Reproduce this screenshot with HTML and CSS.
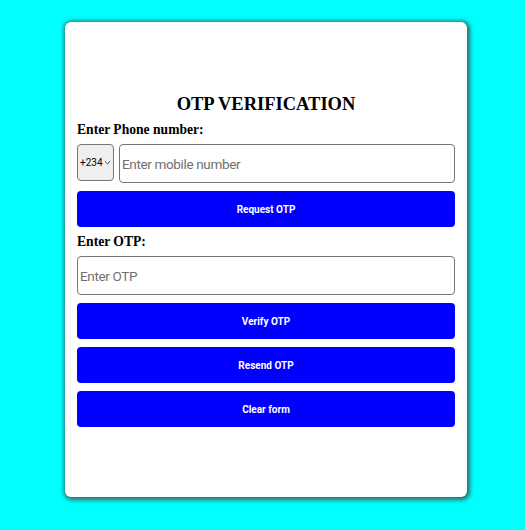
FILE: index.html
```html
<!DOCTYPE html>
<html lang="en">
<head>
<meta charset="utf-8">
<title>OTP Verification</title>
<link rel="stylesheet" href="styles.css">
</head>
<body>
<main class="card">
  <h1 class="title">OTP VERIFICATION</h1>
  <label class="label label-phone" for="phone">Enter Phone number:</label>
  <div class="phone-row">
    <div class="select-wrap">
      <select class="code-select" aria-label="Country code">
        <option>+234</option>
      </select>
      <svg class="chevron" width="7" height="5" viewBox="0 0 7 5" aria-hidden="true"><path d="M0.8 1.2 L3.5 3.8 L6.2 1.2" fill="none" stroke="#333" stroke-width="0.9"/></svg>
    </div>
    <input id="phone" class="field field-phone" type="tel" placeholder="Enter mobile number">
  </div>
  <button class="btn btn-request" type="button">Request OTP</button>
  <label class="label label-otp" for="otp">Enter OTP:</label>
  <input id="otp" class="field field-otp" type="text" placeholder="Enter OTP">
  <button class="btn btn-verify" type="button">Verify OTP</button>
  <button class="btn" type="button">Resend OTP</button>
  <button class="btn" type="button">Clear form</button>
</main>
</body>
</html>
```
FILE: styles.css
```css
html, body {
  margin: 0;
  padding: 0;
}
body {
  background: #00ffff;
  display: flex;
  justify-content: center;
  align-items: flex-start;
  padding: 22px 0 0 7px;
  min-height: 530px;
  box-sizing: border-box;
}
.card {
  width: 402px;
  height: 475px;
  box-sizing: border-box;
  background: #ffffff;
  border-radius: 6px;
  box-shadow: 1px 1px 4px 2px rgba(60, 60, 60, 0.75);
  padding: 71px 12px 0;
  display: flex;
  flex-direction: column;
}
.title {
  margin: 0;
  font-family: "Liberation Serif", "Times New Roman", serif;
  font-weight: bold;
  font-size: 18.5px;
  line-height: 22px;
  text-align: center;
  color: #000;
}
.label {
  display: block;
  font-family: "Liberation Serif", "Times New Roman", serif;
  font-weight: bold;
  font-size: 13.6px;
  line-height: 16px;
  color: #000;
}
.label-phone {
  margin-top: 7px;
}
.phone-row {
  margin-top: 6px;
  display: flex;
  align-items: flex-start;
  gap: 5px;
}
.select-wrap {
  position: relative;
  width: 37px;
  height: 37px;
  flex: none;
}
.code-select {
  appearance: none;
  -webkit-appearance: none;
  width: 100%;
  height: 100%;
  margin: 0;
  box-sizing: border-box;
  border: 1px solid #767676;
  border-radius: 4px;
  background: #efefef;
  font-family: Roboto, "Liberation Sans", sans-serif;
  font-size: 10px;
  color: #000;
  padding: 0 0 0 2px;
}
.chevron {
  position: absolute;
  left: 27px;
  top: 16px;
}
.field {
  box-sizing: border-box;
  height: 39px;
  margin: 0;
  border: 1px solid #767676;
  border-radius: 4px;
  background: #fff;
  font-family: Roboto, "Liberation Sans", sans-serif;
  font-size: 13.5px;
  letter-spacing: -0.35px;
  padding: 0 2px;
  color: #000;
}
.field::placeholder {
  color: #6f6f6f;
}
.field-phone {
  flex: 1;
  min-width: 0;
}
.field-otp {
  width: 100%;
  margin-top: 6px;
}
.label-otp {
  margin-top: 7px;
}
.btn {
  height: 36px;
  margin-top: 8px;
  border: none;
  border-radius: 4px;
  background: #0000ff;
  color: #fff;
  font-family: Roboto, "Liberation Sans", sans-serif;
  font-weight: bold;
  font-size: 10px;
  width: 100%;
  padding: 0;
}
```
